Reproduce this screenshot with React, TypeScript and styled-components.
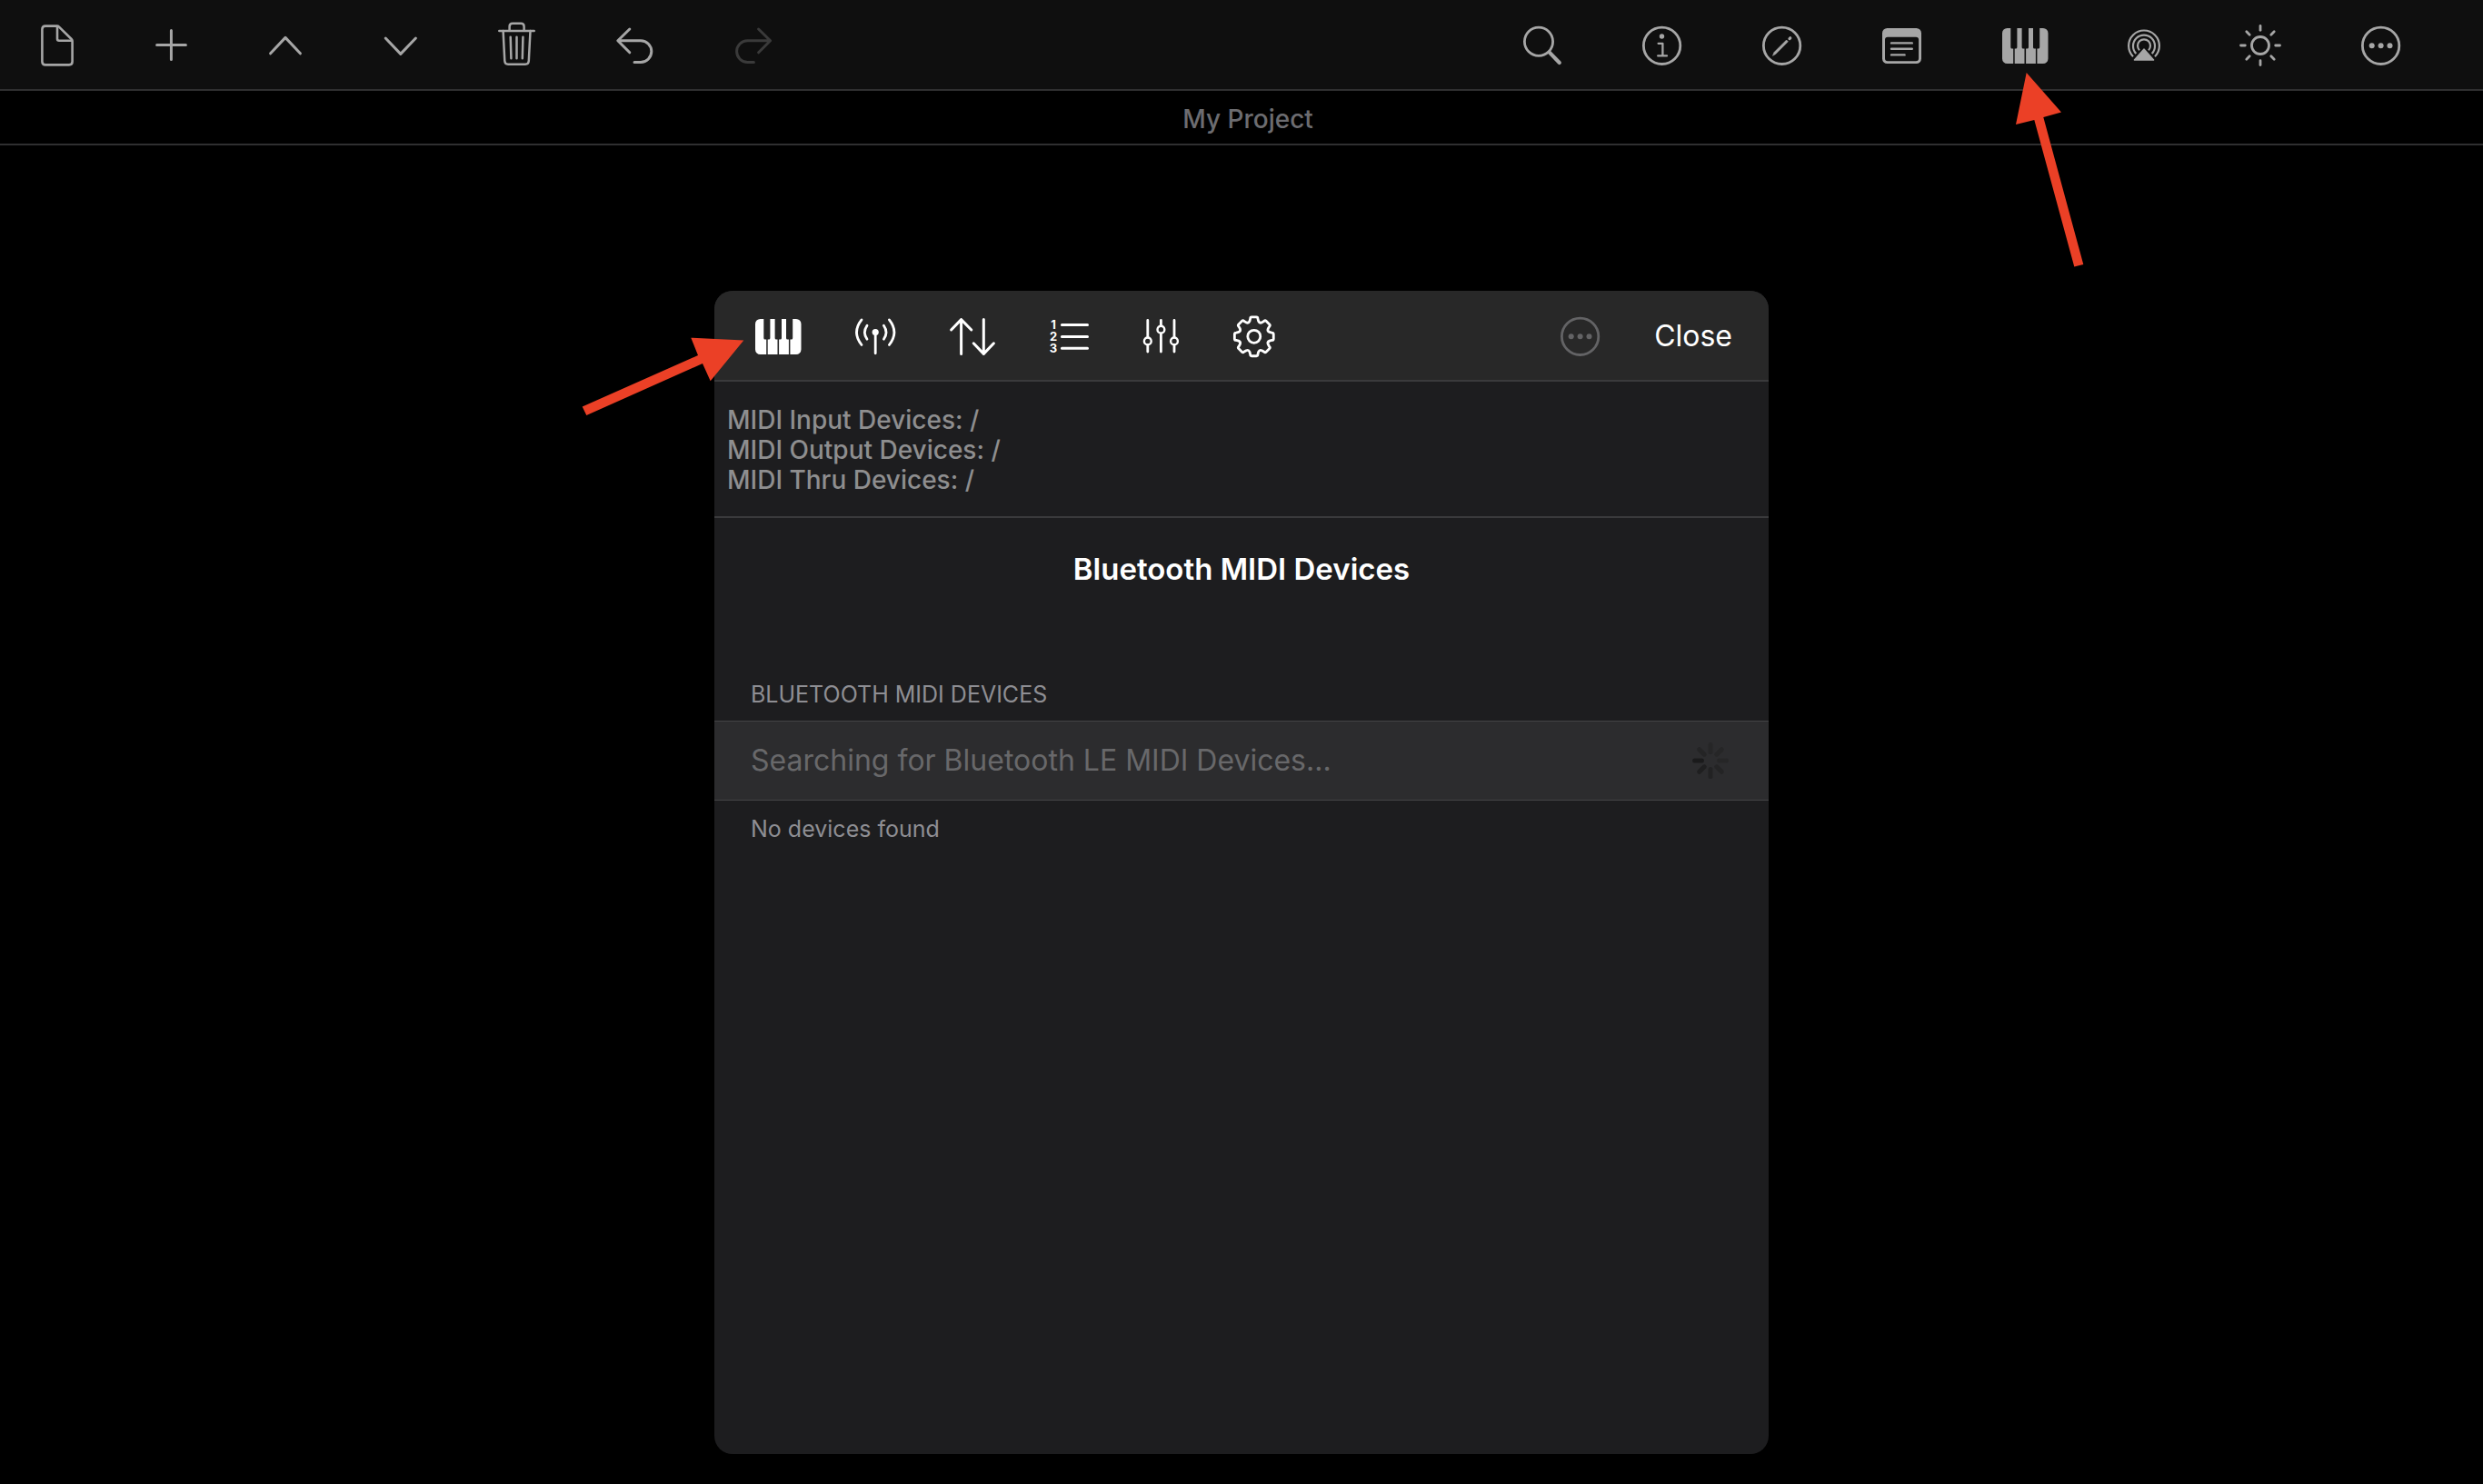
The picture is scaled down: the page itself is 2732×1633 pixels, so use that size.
import React from "react";
import styled, { createGlobalStyle } from "styled-components";

const GlobalStyle = createGlobalStyle`
  *, *::before, *::after { box-sizing: border-box; }
  body {
    margin: 0;
    background: #000;
    color: #fff;
    font-family: Inter, "Liberation Sans", sans-serif;
    -webkit-font-smoothing: antialiased;
  }
`;

const RED = "#eb4026";

/* ---------- layout ---------- */

const Page = styled.div`
  min-height: 100vh;
  display: flex;
  flex-direction: column;
`;

const Bar = styled.header<{ $inset: number; $panel?: boolean }>`
  display: flex;
  align-items: center;
  justify-content: space-between;
  height: 100px;
  padding: 0 ${(p) => p.$inset}px 0 45px;
  background: ${(p) => (p.$panel ? "#282828" : "#0f0f0f")};
  border-bottom: 2px solid ${(p) => (p.$panel ? "#3a3a3c" : "#2f2f30")};
  border-radius: ${(p) => (p.$panel ? "20px 20px 0 0" : "0")};
`;

const IconGroup = styled.div<{ $gap: number }>`
  display: flex;
  align-items: center;
  gap: ${(p) => p.$gap}px;
`;

const IconButton = styled.button<{ $color: string }>`
  display: block;
  position: relative;
  padding: 0;
  border: 0;
  background: none;
  color: ${(p) => p.$color};
  cursor: pointer;

  &:disabled { cursor: default; }
  > svg { display: block; overflow: visible; }
`;

const ProjectTitle = styled.h1`
  margin: 0;
  height: 60px;
  padding: 3px 0 0 14px;
  border-bottom: 2px solid #2f2f30;
  color: #6c6c70;
  font-size: 28px;
  font-weight: 500;
  line-height: 56px;
  text-align: center;
`;

const Stage = styled.main`
  flex: 1;
  display: flex;
  justify-content: center;
  padding: 160px 32px 33px;
`;

const Dialog = styled.section`
  flex: 0 1 1160px;
  display: flex;
  flex-direction: column;
  background: #1d1d1f;
  border-radius: 20px;
`;

const CloseButton = styled.button`
  padding: 2px 0 0;
  border: 0;
  background: none;
  color: #fff;
  font: 400 32px/40px Inter, "Liberation Sans", sans-serif;
  cursor: pointer;
`;

const DeviceSummary = styled.ul`
  margin: 0;
  padding: 26px 14px 23px;
  list-style: none;
  border-bottom: 2px solid #3a3a3c;
  color: #8e8e8f;
  font-size: 28px;
  font-weight: 500;
  line-height: 33px;
`;

const DialogTitle = styled.h2`
  margin: 0;
  padding: 36px 40px;
  font-size: 33px;
  font-weight: 600;
  line-height: 40px;
  text-align: center;
`;

const SectionLabel = styled.h3`
  margin: 0;
  padding: 66px 40px 13px;
  color: #8e8e93;
  font-size: 25px;
  font-weight: 400;
  line-height: 32px;
`;

const SearchRow = styled.div`
  display: flex;
  align-items: center;
  justify-content: space-between;
  height: 88px;
  padding: 0 44px 0 40px;
  background: #2c2c2e;
  border: solid #444446;
  border-width: 1px 0;
  color: #68686a;
  font-size: 32px;
  line-height: 40px;
`;

const Footnote = styled.p`
  margin: 0;
  padding: 15px 40px;
  color: #8e8e93;
  font-size: 25px;
  line-height: 32px;
`;

const Pointer = styled.svg<{ $left: number; $top: number }>`
  position: absolute;
  left: ${(p) => p.$left}px;
  top: ${(p) => p.$top}px;
  z-index: 2;
  pointer-events: none;
`;

/* ---------- icons ---------- */

type GlyphProps = { w: number; x?: number; stroke?: number; children: React.ReactNode };

const Glyph = ({ w, x = 0, stroke = 3, children }: GlyphProps) => (
  <svg
    width={w}
    height={50}
    viewBox={`${x} 0 ${w} 50`}
    fill="none"
    stroke="currentColor"
    strokeWidth={stroke}
    strokeLinecap="round"
    strokeLinejoin="round"
    aria-hidden="true"
  >
    {children}
  </svg>
);

const DocIcon = () => (
  <Glyph w={36} stroke={2.6}>
    <path d="M5 4.6H17.6Q19 4.6 20 5.6L33.6 19Q34.6 20 34.6 21.5V43.8Q34.6 47.4 31 47.4H5Q1.4 47.4 1.4 43.8V8.2Q1.4 4.6 5 4.6Z" />
    <path d="M18 5V18.8Q18 20.8 20 20.8H34" />
  </Glyph>
);
const PlusIcon = () => (
  <Glyph w={35}>
    <path d="M17.4 9.4V41.4M1.6 25.4H33.4" />
  </Glyph>
);
const UpIcon = () => (
  <Glyph w={36}>
    <path d="M1.6 34.8L18 17.4L34.4 34.8" />
  </Glyph>
);
const DownIcon = () => (
  <Glyph w={36}>
    <path d="M2.2 18L18.8 35.4L35.4 18" />
  </Glyph>
);
const TrashIcon = () => (
  <Glyph w={40} stroke={2.5}>
    <path d="M1.3 10H39.7M12.6 10V5.2Q12.6 1.8 16 1.8H25.2Q28.6 1.8 28.6 5.2V10" />
    <path d="M5.6 10L7.3 43Q7.5 46.7 11 46.7H30Q33.6 46.7 33.8 43L35.5 10" />
    <path d="M13.7 16.8L14.4 40.2M20.5 16.8V40.2M27.4 16.8L26.8 40.2" />
  </Glyph>
);
const UndoIcon = () => (
  <Glyph w={41}>
    <path d="M14.8 8L1.8 20.8L14.8 33.8M2.5 20.8H27A11.8 11.8 0 0 1 27 44.4H20" />
  </Glyph>
);
const RedoIcon = () => (
  <Glyph w={41}>
    <path d="M25.6 8L38.6 20.8L25.6 33.8M38 20.8H13.4A11.8 11.8 0 0 0 13.4 44.4H20.4" />
  </Glyph>
);
const SearchIcon = () => (
  <Glyph w={42} stroke={2.8}>
    <circle cx="17" cy="21.8" r="15.6" />
    <path d="M28.8 33.6L39.8 45" strokeWidth="4.2" />
  </Glyph>
);
const InfoIcon = () => (
  <Glyph w={43} stroke={2.8}>
    <circle cx="21.6" cy="26.3" r="20.2" />
    <circle cx="21.5" cy="16" r="2.7" fill="currentColor" stroke="none" />
    <path d="M17.6 23.8H22.4V37.2M17.2 37.4H27" strokeWidth="2.3" />
  </Glyph>
);
const PencilCircleIcon = () => (
  <Glyph w={43} stroke={2.8}>
    <circle cx="21.6" cy="26.3" r="20.2" />
    <path
      d="M11.6 37L13 33.6L26.6 20L28.4 21.8L14.8 35.4Z"
      fill="currentColor"
      strokeWidth="0.6"
    />
    <path d="M30 18.6L30.8 17.8" strokeWidth="3.2" />
  </Glyph>
);
const NoteIcon = () => (
  <Glyph w={43} stroke={2.4}>
    <path
      fillRule="evenodd"
      fill="currentColor"
      stroke="none"
      d="M5.5 7H37.5A5.5 5.5 0 0 1 43 12.5V40.5A5.5 5.5 0 0 1 37.5 46H5.5A5.5 5.5 0 0 1 0 40.5V12.5A5.5 5.5 0 0 1 5.5 7ZM6 16.7Q3 16.7 3 19.7V40Q3 43.2 6 43.2H37Q40.1 43.2 40.1 40V19.7Q40.1 16.7 37 16.7Z"
    />
    <path d="M10 23.4H32.8M10 29.8H32.8M10 36.4H24.6" />
  </Glyph>
);
const PianoIcon = () => (
  <Glyph w={50}>
    <g fill="currentColor" stroke="none">
      <path d="M5.5 7H9.3V28Q9.3 29.5 10.8 29.5H12.2V46H5.5A5.5 5.5 0 0 1 0 40.5V12.5A5.5 5.5 0 0 1 5.5 7Z" />
      <path d="M16.4 7H21.6V28Q21.6 29.5 23.1 29.5H24.5V46H13.7V29.5H14.9Q16.4 29.5 16.4 28Z" />
      <path d="M29 7H34V28Q34 29.5 35.5 29.5H36.9V46H26.1V29.5H27.5Q29 29.5 29 28Z" />
      <path d="M41.2 7H45A5.5 5.5 0 0 1 50.5 12.5V40.5A5.5 5.5 0 0 1 45 46H38.4V29.5H39.7Q41.2 29.5 41.2 28Z" />
    </g>
  </Glyph>
);
const AirplayIcon = () => (
  <Glyph w={34} x={1} stroke={2.2}>
    <path
      strokeLinecap="butt"
      d="M6 38.3A16.9 16.9 0 1 1 30 38.3M9.3 34.9A12 12 0 1 1 26.7 34.9M13 31.2A7 7 0 1 1 23 31.2"
    />
    <path d="M18 30L28.6 42H7.4Z" fill="currentColor" strokeWidth="1.4" />
  </Glyph>
);
const SunIcon = () => (
  <Glyph w={44} x={1} stroke={2.8}>
    <circle cx="23" cy="26" r="9.5" />
    {[0, 45, 90, 135, 180, 225, 270, 315].map((a) => (
      <path key={a} d="M23 4.5V9.3" transform={`rotate(${a} 23 26)`} />
    ))}
  </Glyph>
);
const MoreIcon = () => (
  <Glyph w={43} stroke={2.8}>
    <circle cx="21.6" cy="26.3" r="20.2" />
    <g fill="currentColor" stroke="none">
      <circle cx="11.7" cy="26.3" r="3" />
      <circle cx="21.6" cy="26.3" r="3" />
      <circle cx="31.5" cy="26.3" r="3" />
    </g>
  </Glyph>
);
const AntennaIcon = () => (
  <Glyph w={44} stroke={2.8}>
    <circle cx="22.2" cy="21.5" r="3.6" fill="currentColor" stroke="none" />
    <path d="M22.2 22V44.8" />
    <path d="M13 14.2Q7.8 21.7 13 29.2M31.4 14.2Q36.6 21.7 31.4 29.2" />
    <path d="M7 7.9Q-4 21.7 7 35.5M37.4 7.9Q48.4 21.7 37.4 35.5" />
  </Glyph>
);
const SortIcon = () => (
  <Glyph w={50}>
    <path d="M12.6 7.6V45.4M1.6 19L12.6 7.6L23.8 19" />
    <path d="M37.3 7.6V45.4M26.2 33.8L37.3 45.4L48.4 33.8" />
  </Glyph>
);
const ListIcon = () => (
  <Glyph w={43}>
    <path d="M13.4 13.6H41.5M13.4 26.4H41.5M13.4 39.2H41.5" />
    <g
      fill="currentColor"
      stroke="none"
      fontFamily="Inter, sans-serif"
      fontSize="13"
      fontWeight="700"
      textAnchor="middle"
    >
      <text x="4" y="18">1</text>
      <text x="4" y="31">2</text>
      <text x="4" y="44">3</text>
    </g>
  </Glyph>
);
const SlidersIcon = () => (
  <Glyph w={39} stroke={2.8}>
    <path d="M4.8 8.4V27M4.8 36V43M19.4 8.4V14.4M19.4 23V43M34 8.4V27M34 36V43" />
    <circle cx="4.8" cy="31.4" r="3.9" strokeWidth="2.4" />
    <circle cx="19.4" cy="18.7" r="3.9" strokeWidth="2.4" />
    <circle cx="34" cy="31.4" r="3.9" strokeWidth="2.4" />
  </Glyph>
);

const gearOutline = () => {
  const at = (r: number, deg: number) => {
    const a = ((deg - 90) * Math.PI) / 180;
    return `${(22.8 + r * Math.cos(a)).toFixed(2)} ${(26.3 + r * Math.sin(a)).toFixed(2)}`;
  };
  let d = "";
  for (let k = 0; k < 8; k += 1) {
    const c = k * 45;
    d += `${k ? "L" : "M"}${at(20, c - 12)}Q${at(21.8, c - 11)} ${at(21.6, c - 7)}`;
    d += `L${at(21.6, c + 7)}Q${at(21.8, c + 11)} ${at(20, c + 12)}`;
    d += `L${at(17.6, c + 16)}Q${at(15.6, c + 22.5)} ${at(17.6, c + 29)}`;
  }
  return `${d}Z`;
};
const GearIcon = () => (
  <Glyph w={46} stroke={2.8}>
    <path d={gearOutline()} />
    <circle cx="22.8" cy="26.3" r="7" />
  </Glyph>
);

const SPOKES = ["#262627", "#262627", "#262627", "#242425", "#222223", "#1f1f20", "#1a1a1b", "#242425"];
const Spinner = () => (
  <svg width={40} height={40} viewBox="0 0 40 40" role="img" aria-label="Searching">
    {SPOKES.map((color, i) => (
      <path
        key={i}
        d="M20 2.6V10.4"
        stroke={color}
        strokeWidth="5"
        strokeLinecap="round"
        transform={`rotate(${i * 45} 20 20)`}
      />
    ))}
  </svg>
);

/* ---------- page ---------- */

type Action = {
  label: string;
  Icon: () => React.ReactElement;
  disabled?: boolean;
  pointer?: React.ReactNode;
};

const toolbarPointer = (
  <Pointer $left={13} $top={54} width={80} height={218} viewBox="0 0 80 218" aria-hidden="true">
    <path d="M13.7 2L52 45.5L32.3 51L76.3 213L66.3 215.5L22.3 54L2 59Z" fill={RED} />
  </Pointer>
);
const panelPointer = (
  <Pointer $left={-193} $top={26} width={182} height={90} viewBox="0 0 182 90" aria-hidden="true">
    <path d="M180.3 4.4L122.3 1.7L130 21L2.7 77.5L7.3 87L135 30L143.7 49.2Z" fill={RED} />
  </Pointer>
);

const editActions: Action[] = [
  { label: "Projects", Icon: DocIcon },
  { label: "Add", Icon: PlusIcon },
  { label: "Move up", Icon: UpIcon },
  { label: "Move down", Icon: DownIcon },
  { label: "Delete", Icon: TrashIcon },
  { label: "Undo", Icon: UndoIcon },
  { label: "Redo", Icon: RedoIcon, disabled: true },
];
const viewActions: Action[] = [
  { label: "Search", Icon: SearchIcon },
  { label: "Info", Icon: InfoIcon },
  { label: "Edit", Icon: PencilCircleIcon },
  { label: "Notes", Icon: NoteIcon },
  { label: "MIDI", Icon: PianoIcon, pointer: toolbarPointer },
  { label: "AirPlay", Icon: AirplayIcon },
  { label: "Brightness", Icon: SunIcon },
  { label: "More", Icon: MoreIcon },
];
const panelActions: Action[] = [
  { label: "MIDI devices", Icon: PianoIcon, pointer: panelPointer },
  { label: "Network", Icon: AntennaIcon },
  { label: "Routing", Icon: SortIcon },
  { label: "Program list", Icon: ListIcon },
  { label: "Controls", Icon: SlidersIcon },
  { label: "Settings", Icon: GearIcon },
];

type ActionsProps = { items: Action[]; gap: number; color: string };

const Actions = ({ items, gap, color }: ActionsProps) => (
  <IconGroup $gap={gap}>
    {items.map(({ label, Icon, disabled, pointer }) => (
      <IconButton
        key={label}
        type="button"
        aria-label={label}
        disabled={disabled}
        $color={disabled ? "#3a3a3a" : color}
      >
        <Icon />
        {pointer}
      </IconButton>
    ))}
  </IconGroup>
);

export default function App() {
  return (
    <Page>
      <GlobalStyle />
      <Bar $inset={91}>
        <Actions items={editActions} gap={90} color="#a6a6a6" />
        <Actions items={viewActions} gap={89} color="#a6a6a6" />
      </Bar>
      <ProjectTitle>My Project</ProjectTitle>
      <Stage>
        <Dialog role="dialog" aria-labelledby="dialog-title">
          <Bar $inset={40} $panel>
            <Actions items={panelActions} gap={60} color="#ffffff" />
            <IconGroup $gap={60}>
              <IconButton type="button" aria-label="More" disabled $color="#636365">
                <MoreIcon />
              </IconButton>
              <CloseButton type="button">Close</CloseButton>
            </IconGroup>
          </Bar>
          <DeviceSummary>
            <li>MIDI Input Devices: /</li>
            <li>MIDI Output Devices: /</li>
            <li>MIDI Thru Devices: /</li>
          </DeviceSummary>
          <DialogTitle id="dialog-title">Bluetooth MIDI Devices</DialogTitle>
          <SectionLabel>BLUETOOTH MIDI DEVICES</SectionLabel>
          <SearchRow>
            <span>Searching for Bluetooth LE MIDI Devices...</span>
            <Spinner />
          </SearchRow>
          <Footnote>No devices found</Footnote>
        </Dialog>
      </Stage>
    </Page>
  );
}
